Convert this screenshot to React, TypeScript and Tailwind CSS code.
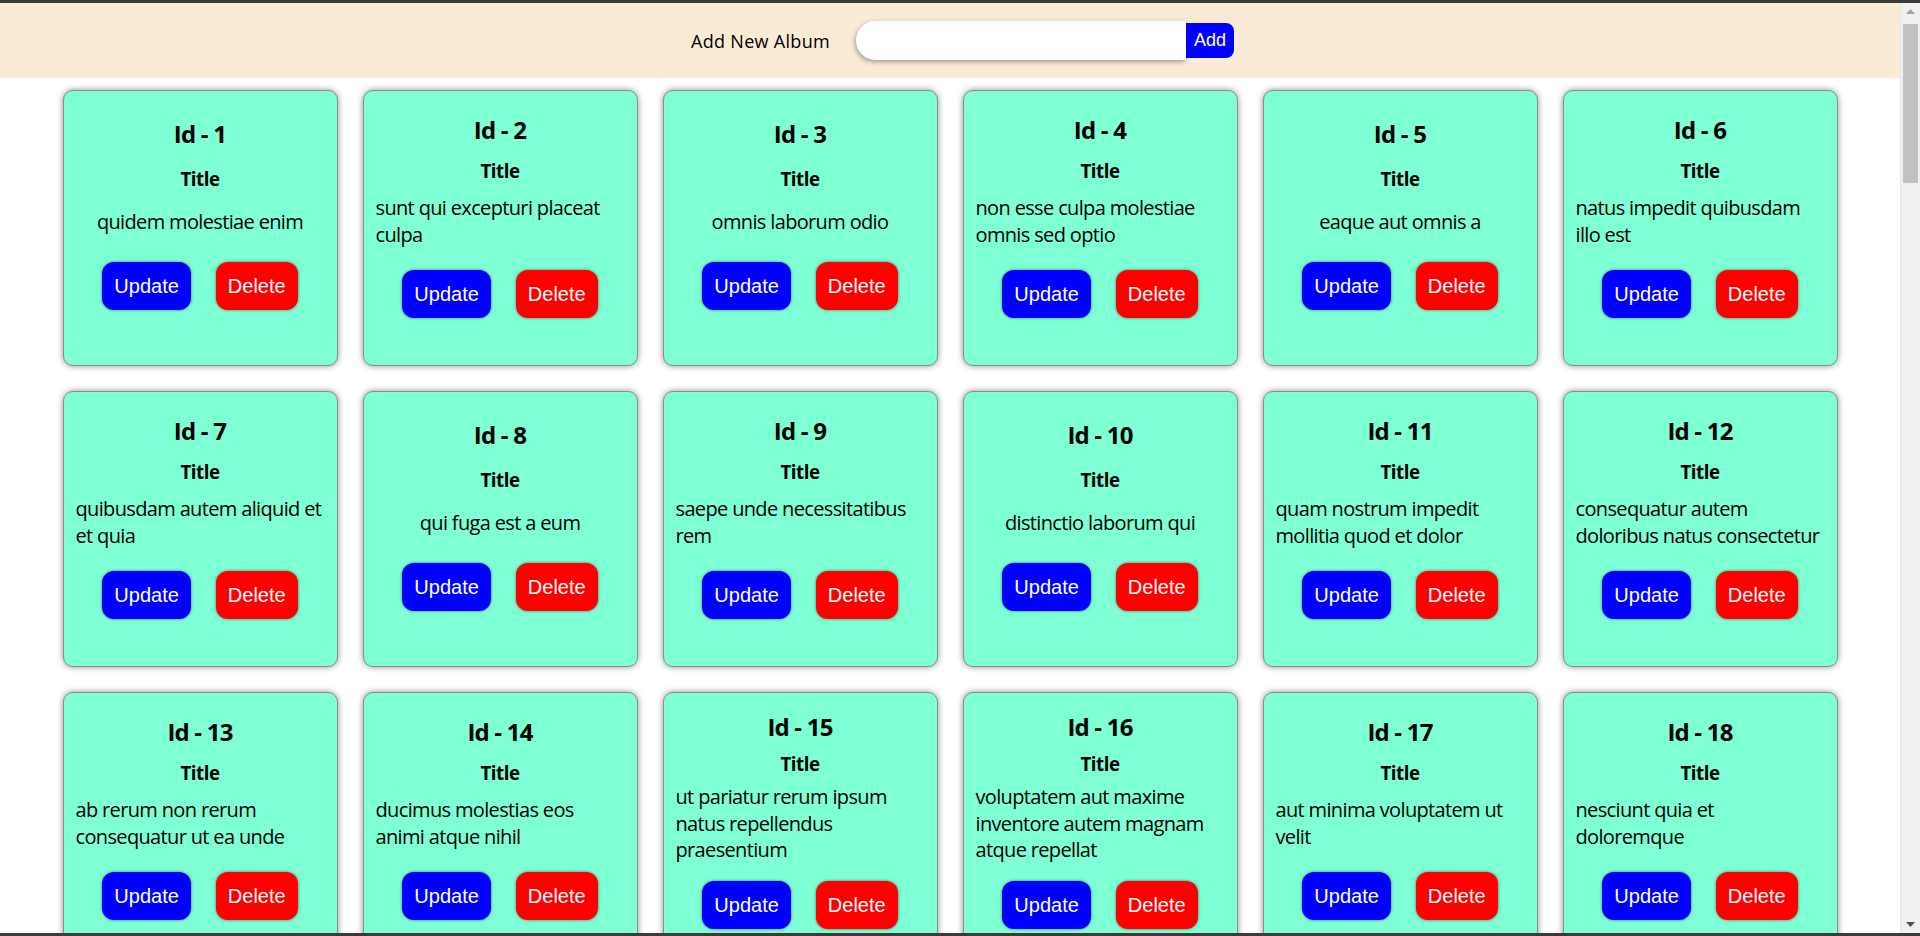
const TITLES = [
  "quidem molestiae enim",
  "sunt qui excepturi placeat culpa",
  "omnis laborum odio",
  "non esse culpa molestiae omnis sed optio",
  "eaque aut omnis a",
  "natus impedit quibusdam illo est",
  "quibusdam autem aliquid et et quia",
  "qui fuga est a eum",
  "saepe unde necessitatibus rem",
  "distinctio laborum qui",
  "quam nostrum impedit mollitia quod et dolor",
  "consequatur autem doloribus natus consectetur",
  "ab rerum non rerum consequatur ut ea unde",
  "ducimus molestias eos animi atque nihil",
  "ut pariatur rerum ipsum natus repellendus praesentium",
  "voluptatem aut maxime inventore autem magnam atque repellat",
  "aut minima voluptatem ut velit",
  "nesciunt quia et doloremque",
  "velit pariatur quaerat similique libero omnis quia",
  "voluptas rerum iure ut enim",
  "repudiandae voluptatem optio est consequatur rem in temporibus et",
  "et rem non provident vel ut",
  "incidunt quisquam hic adipisci sequi",
  "dolores ut et facere placeat",
  "vero maxime id possimus sunt neque et consequatur",
  "quibusdam saepe ipsa vel harum",
  "id non beatae iure",
  "sed et sequi",
];

const albums = Array.from({ length: 100 }, (_, i) => ({ id: i + 1, title: TITLES[i % TITLES.length] }));

const BODY_FONT = "font-['Segoe_UI','Open_Sans',sans-serif]";
const BTN_FONT = "font-['Liberation_Sans',Arial,sans-serif]";

function AlbumCard({ id, title }: { id: number; title: string }) {
  return (
    <div className="flex h-[276px] w-[275px] flex-col items-center justify-evenly rounded-[10px] border border-[#8c8c8c] bg-[#7fffd4] px-[12px] shadow-[0_0_6px_rgba(0,0,0,0.45)]">
      <h2 className="mt-[11px] text-[24px] leading-[32px] font-bold tracking-[-0.8px]">Id - {id}</h2>
      <h3 className="text-[18.72px] leading-[25px] font-bold tracking-[-0.45px]">Title</h3>
      <p className="mt-[1px] mb-[10px] text-[20px] leading-[26.6px] tracking-[-0.65px]">{title}</p>
      <div className={`flex gap-[25px] ${BTN_FONT}`}>
        <button className="h-[48px] rounded-[12px] bg-[#0000ff] px-[12px] text-[20px] text-white shadow-[0_0_3px_rgba(0,0,0,0.55)]">
          Update
        </button>
        <button className="h-[48px] rounded-[12px] bg-[#ff0000] px-[12px] text-[20px] text-white shadow-[0_0_3px_rgba(0,0,0,0.55)]">
          Delete
        </button>
      </div>
      <div className="h-[23px]" />
    </div>
  );
}

// classic windows style scrollbar, page is scrolled to the top
function ScrollBar() {
  return (
    <div className="flex w-[20px] flex-col border-l border-[#e6e6e6] bg-[#f0f0f0]">
      <div className="flex h-[17px] items-center justify-center">
        <svg width="9" height="5" viewBox="0 0 9 5">
          <path d="M0 5 L4.5 0 L9 5 Z" fill="#a3a3a3" />
        </svg>
      </div>
      <div className="mx-[2px] mt-[4px] h-[159px] bg-[#c1c1c1]" />
      <div className="flex-1" />
      <div className="flex h-[17px] items-center justify-center">
        <svg width="9" height="5" viewBox="0 0 9 5">
          <path d="M0 0 L9 0 L4.5 5 Z" fill="#505050" />
        </svg>
      </div>
    </div>
  );
}

export default function App() {
  return (
    <div className={`flex h-screen flex-col bg-[#3b3b3b] py-[3px] text-black ${BODY_FONT}`}>
      <div className="flex min-h-0 flex-1">
        <div className="min-w-0 flex-1 overflow-y-scroll bg-white [scrollbar-width:none]">
          {/* add album bar */}
          <header className="flex h-[75px] items-center justify-center bg-[#faebd7] pl-[25px]">
            <label htmlFor="album" className="text-[18px] leading-[24px] tracking-[0.3px]">
              Add New Album
            </label>
            <div className="ml-[26px] flex items-center">
              <input
                id="album"
                type="text"
                className="h-[39px] w-[330px] rounded-l-[20px] bg-white px-3 shadow-[-1px_2px_5px_rgba(0,0,0,0.35)] outline-none"
              />
              <button className={`h-[35px] w-[48px] rounded-r-[8px] bg-[#0000ff] text-[18px] text-white ${BTN_FONT}`}>Add</button>
            </div>
          </header>

          <main className="flex flex-wrap justify-center gap-[25px] pt-[12px] pb-[25px]">
            {albums.map((album) => (
              <AlbumCard key={album.id} {...album} />
            ))}
          </main>
        </div>
        <ScrollBar />
      </div>
    </div>
  );
}
